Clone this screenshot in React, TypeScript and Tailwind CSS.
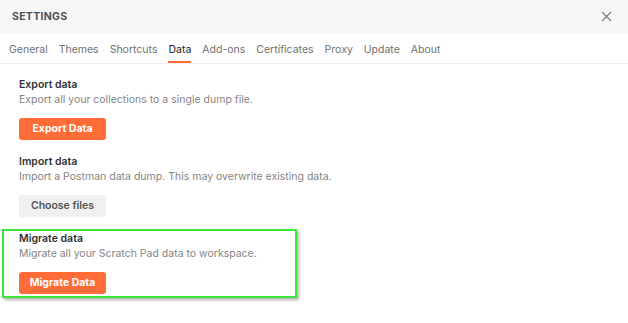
const tabs = ['General', 'Themes', 'Shortcuts', 'Data', 'Add-ons', 'Certificates', 'Proxy', 'Update', 'About']

const Section = ({ title, text, children }: { title: string; text: string; children: React.ReactNode }) => (
  <div>
    <h3 className="text-[10.5px] leading-[15px] font-semibold text-[#333]">{title}</h3>
    <p className="text-[10.5px] leading-[15px] text-[#858585]">{text}</p>
    <div className="mt-[11px] flex">{children}</div>
  </div>
)

const OrangeButton = ({ label }: { label: string }) => (
  <button className="w-[87px] h-[22px] rounded-[3px] bg-[#ff6c37] text-white text-[10.5px] font-bold">{label}</button>
)

const App = () => {
  return (
    <div className="w-[628px] h-[323px] bg-white font-['Inter',sans-serif] overflow-hidden">
      <header className="h-[33px] bg-[#f7f7f7] flex items-center justify-between pl-[12px] pr-[16px]">
        <span className="text-[10.5px] font-bold tracking-[0.3px] text-[#505050]">SETTINGS</span>
        <svg width="11" height="11" viewBox="0 0 11 11" className="text-[#7a7a7a]">
          <path d="M1 1L10 10M10 1L1 10" stroke="currentColor" strokeWidth="1.1" />
        </svg>
      </header>

      <nav className="flex gap-[11px] pl-[9px] h-[31px] border-b border-[#ededed]">
        {tabs.map((t) => (
          <div key={t} className="relative pt-[10px]">
            <span className={`block text-[10.5px] leading-[14px] ${t === 'Data' ? 'text-[#222]' : 'text-[#707070]'}`}>{t}</span>
            {t === 'Data' && <div className="absolute left-0 right-0 bottom-0 h-[2px] bg-[#ff6c37]" />}
          </div>
        ))}
      </nav>

      <main className="pl-[19px] pt-[13px]">
        <Section title="Export data" text="Export all your collections to a single dump file.">
          <OrangeButton label="Export Data" />
        </Section>

        <div className="mt-[14px]">
          <Section title="Import data" text="Import a Postman data dump. This may overwrite existing data.">
            <button className="w-[87px] h-[22px] rounded-[3px] bg-[#f0f0f0] text-[#555] text-[10.5px] font-semibold">Choose files</button>
          </Section>
        </div>

        <div className="mt-[12px] -ml-[17px] w-[295px] border-2 border-[#3ee43e] pl-[15px] pb-[2px] shadow-[2px_2px_3px_rgba(0,0,0,0.3)]">
          <Section title="Migrate data" text="Migrate all your Scratch Pad data to workspace.">
            <OrangeButton label="Migrate Data" />
          </Section>
        </div>
      </main>
    </div>
  )
}

export default App
